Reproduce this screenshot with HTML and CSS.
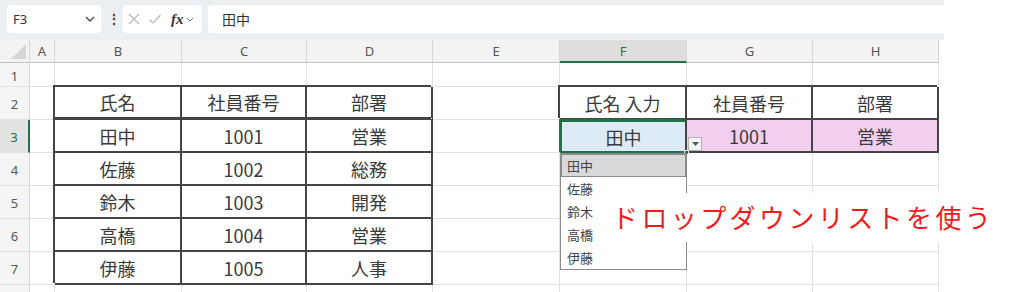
FILE: index.html
```html
<!DOCTYPE html>
<html lang="ja">
<head>
    <meta charset="UTF-8">
    <title>ドロップダウンリスト</title>
    <link rel="stylesheet" href="styles.css">
</head>
<body>

<div class="app">
    <!-- Formula bar -->
    <div class="topbar">
        <div class="namebox">
            <span>F3</span>
            <svg class="chev" width="10" height="6" viewBox="0 0 10 6"><path d="M1 1l4 4 4-4" fill="none" stroke="#444" stroke-width="1.3"/></svg>
        </div>
        <div class="dots">⋮</div>
        <div class="fxbox">
            <svg width="14" height="14" viewBox="0 0 14 14"><path d="M2 2l10 10M12 2L2 12" stroke="#b8b8b8" stroke-width="1.2"/></svg>
            <svg width="14" height="14" viewBox="0 0 14 14"><path d="M1.5 7.5l3.5 3.5 7.5-8" fill="none" stroke="#b8b8b8" stroke-width="1.2"/></svg>
            <span class="fx">fx</span>
            <svg width="8" height="5" viewBox="0 0 8 5"><path d="M1 1l3 3 3-3" fill="none" stroke="#777" stroke-width="1"/></svg>
        </div>
        <div class="formula">田中</div>
    </div>

    <!-- Sheet grid -->
    <div class="sheet">
        <div class="ch corner"><svg width="15" height="15" viewBox="0 0 15 15"><path d="M15 0V15H0z" fill="#d6d6d6"/></svg></div>
        <div class="ch">A</div><div class="ch">B</div><div class="ch">C</div><div class="ch">D</div>
        <div class="ch">E</div><div class="ch sel">F</div><div class="ch">G</div><div class="ch">H</div>

        <div class="rh">1</div>
        <div class="c"></div><div class="c"></div><div class="c"></div><div class="c"></div>
        <div class="c"></div><div class="c"></div><div class="c"></div><div class="c"></div>

        <div class="rh">2</div>
        <div class="c"></div><div class="c t th">氏名</div><div class="c t th">社員番号</div><div class="c t th">部署</div>
        <div class="c"></div><div class="c t">氏名 入力</div><div class="c t">社員番号</div><div class="c t">部署</div>

        <div class="rh sel">3</div>
        <div class="c"></div><div class="c t">田中</div><div class="c t">1001</div><div class="c t">営業</div>
        <div class="c"></div><div class="c t active">田中</div><div class="c t pink">1001</div><div class="c t pink">営業</div>

        <div class="rh">4</div>
        <div class="c"></div><div class="c t">佐藤</div><div class="c t">1002</div><div class="c t">総務</div>
        <div class="c"></div><div class="c"></div><div class="c"></div><div class="c"></div>

        <div class="rh">5</div>
        <div class="c"></div><div class="c t">鈴木</div><div class="c t">1003</div><div class="c t">開発</div>
        <div class="c"></div><div class="c"></div><div class="c"></div><div class="c"></div>

        <div class="rh">6</div>
        <div class="c"></div><div class="c t">高橋</div><div class="c t">1004</div><div class="c t">営業</div>
        <div class="c"></div><div class="c"></div><div class="c"></div><div class="c"></div>

        <div class="rh">7</div>
        <div class="c"></div><div class="c t">伊藤</div><div class="c t">1005</div><div class="c t">人事</div>
        <div class="c"></div><div class="c"></div><div class="c"></div><div class="c"></div>

        <div class="rh"></div>
        <div class="c"></div><div class="c"></div><div class="c"></div><div class="c"></div>
        <div class="c"></div><div class="c"></div><div class="c"></div><div class="c"></div>

        <!-- Overlays -->
        <div class="handle"></div>
        <div class="ddbtn"><svg width="7" height="4" viewBox="0 0 7 4"><path d="M0 0h7L3.5 4z" fill="#555"/></svg></div>
        <ul class="ddlist">
            <li class="hl">田中</li>
            <li>佐藤</li>
            <li>鈴木</li>
            <li>高橋</li>
            <li>伊藤</li>
        </ul>
        <div class="callout">ドロップダウンリストを使う</div>
    </div>
</div>

</body>
</html>
```

FILE: styles.css
```css
body {
    margin: 0;
    background-color: white;
    font-family: "Noto Sans", "Noto Sans CJK JP", sans-serif;
    color: #333;
    overflow: hidden;
}
.app {
    width: 944px;
}
/* Formula bar */
.topbar {
    height: 40px;
    box-sizing: border-box;
    padding: 5px 0 7px 7px;
    background-color: #eceff2;
    display: flex;
    gap: 6px;
}
.namebox, .fxbox, .formula {
    background-color: white;
    border-radius: 4px;
    height: 28px;
    box-sizing: border-box;
    display: flex;
    align-items: center;
}
.namebox {
    width: 94px;
    padding: 0 6px 0 6px;
    justify-content: space-between;
    font-size: 13px;
}
.dots {
    width: 10px;
    font-size: 14px;
    line-height: 28px;
    text-align: center;
    color: #444;
    font-weight: bold;
}
.fxbox {
    width: 79px;
    padding: 0 3px 0 4px;
    gap: 7px;
}
.fx {
    font-family: "Liberation Serif", serif;
    font-style: italic;
    font-weight: bold;
    font-size: 15px;
    color: #333;
    margin-left: 2px;
    margin-right: -5px;
}
.formula {
    flex: 1;
    padding-left: 14px;
    font-size: 14px;
    font-family: "Noto Sans CJK JP", sans-serif;
    border-radius: 4px 0 0 4px;
}
/* Sheet */
.sheet {
    position: relative;
    display: grid;
    grid-template-columns: 30px 25px 127px 125px 126px 127px 127px 126px 126px;
    grid-template-rows: 23px 24px repeat(6, 33px) 20px;
    font-family: "Noto Sans CJK JP", sans-serif;
}
.sheet > div {
    box-sizing: border-box;
}
.ch {
    background-color: #f3f3f3;
    border-right: 1px solid #d6d6d6;
    border-bottom: 1px solid #c4c4c4;
    font-family: "Noto Sans", sans-serif;
    font-size: 13px;
    color: #555;
    display: flex;
    align-items: center;
    justify-content: center;
}
.ch.corner {
    align-items: flex-end;
    justify-content: flex-end;
    padding: 0 3px 3px 0;
}
.ch.sel {
    background-color: #dedede;
    color: #217346;
    border-bottom: 2px solid #217346;
}
.rh {
    background-color: #f5f5f5;
    border-right: 1px solid #d6d6d6;
    border-bottom: 1px solid #e4e4e4;
    font-family: "Noto Sans", sans-serif;
    font-size: 13px;
    color: #555;
    display: flex;
    align-items: center;
    justify-content: center;
    padding-top: 2px;
}
.rh.sel {
    background-color: #e2e2e2;
    color: #217346;
    border-right: 2px solid #217346;
}
.c {
    border-right: 1px solid #e1e1e1;
    border-bottom: 1px solid #e1e1e1;
    display: flex;
    align-items: center;
    justify-content: center;
    font-size: 18px;
    color: #3a3a3a;
}
/* Bordered table cells */
.c.t {
    border-right: 2px solid #444;
    border-bottom: 2px solid #444;
    box-shadow: -2px -2px 0 #444;
}
.c.th {
    border-bottom: 3px double #444;
}
.c.active {
    background-color: #ddebf7;
    border: 2px solid #217346;
    box-shadow: -1px -1px 0 #217346;
}
.c.pink {
    background-color: #f2cfee;
}
.handle {
    position: absolute;
    left: 684px;
    top: 110px;
    width: 5px;
    height: 5px;
    background-color: #217346;
    border: 1px solid white;
}
.ddbtn {
    position: absolute;
    left: 688px;
    top: 97px;
    width: 14px;
    height: 14px;
    background-color: #f4f4f4;
    border: 1px solid #b5b5b5;
    display: flex;
    align-items: center;
    justify-content: center;
}
.ddlist {
    position: absolute;
    left: 560px;
    top: 113px;
    width: 127px;
    height: 117px;
    margin: 0;
    padding: 0;
    list-style: none;
    box-sizing: border-box;
    background-color: white;
    border: 1px solid #8a8a8a;
    font-size: 13px;
    color: #444;
}
.ddlist li {
    height: 23px;
    line-height: 23px;
    padding-left: 6px;
    box-sizing: border-box;
}
.ddlist li.hl {
    background-color: #d9d9d9;
    border: 1px solid #8a8a8a;
    line-height: 21px;
    padding-left: 5px;
}
.callout {
    position: absolute;
    left: 603px;
    top: 153px;
    width: 420px;
    height: 49px;
    box-sizing: border-box;
    padding-left: 9px;
    background-color: white;
    color: #f01c1c;
    font-size: 26px;
    letter-spacing: 3.4px;
    line-height: 47px;
    white-space: nowrap;
}
```
